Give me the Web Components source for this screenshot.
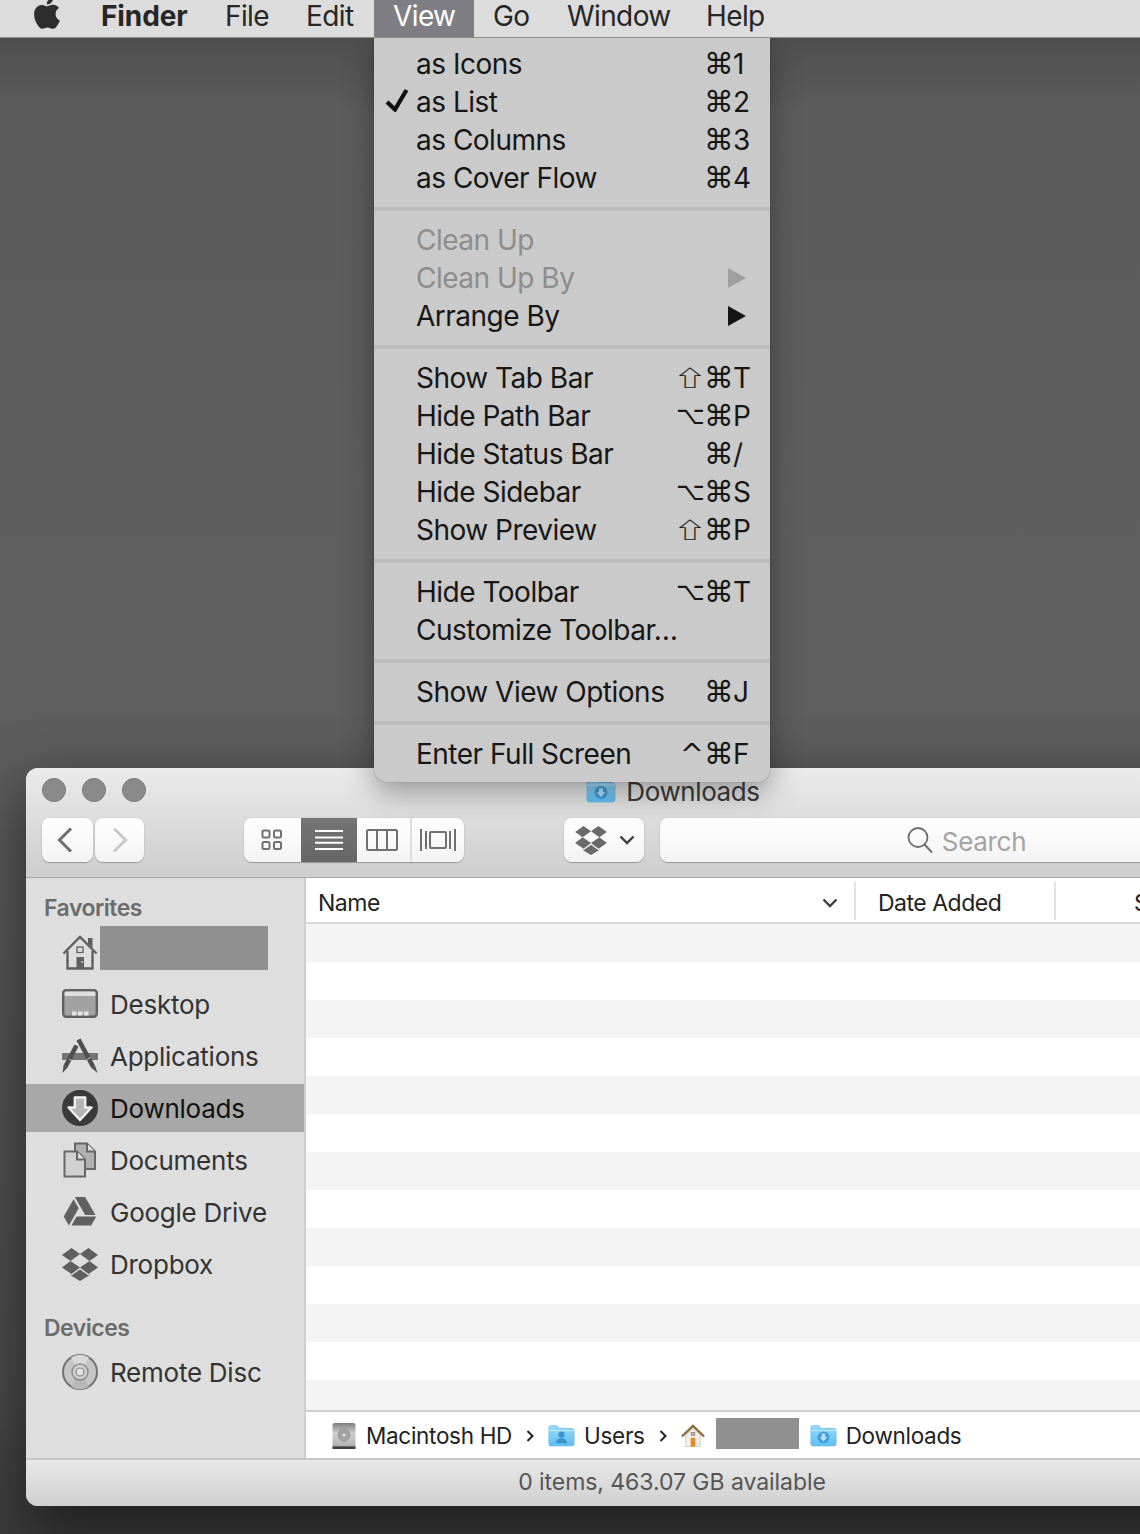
<!DOCTYPE html>
<html><head><meta charset="utf-8">
<style>
html,body{margin:0;padding:0}
body{width:1140px;height:1534px;overflow:hidden;font-family:Inter,Roboto,"Liberation Sans",sans-serif;background:#555}
</style></head><body>
<mac-desktop>
  <mac-menubar slot="bar">
    <mac-icon name="apple" style="margin:-6px 16px 0 28px"></mac-icon>
    <bar-item bold w="124">Finder</bar-item>
    <bar-item w="81">File</bar-item>
    <bar-item w="87">Edit</bar-item>
    <bar-item active w="100">View</bar-item>
    <bar-item w="74">Go</bar-item>
    <bar-item w="139">Window</bar-item>
    <bar-item w="90">Help</bar-item>
  </mac-menubar>
  <finder-window slot="win">
    <finder-toolbar slot="toolbar"></finder-toolbar>
    <finder-sidebar slot="side">
      <side-head>Favorites</side-head>
      <side-item icon="home" redacted></side-item>
      <side-item icon="desktop">Desktop</side-item>
      <side-item icon="apps">Applications</side-item>
      <side-item icon="download" selected>Downloads</side-item>
      <side-item icon="docs">Documents</side-item>
      <side-item icon="gdrive">Google Drive</side-item>
      <side-item icon="dropbox">Dropbox</side-item>
      <side-head devices>Devices</side-head>
      <side-item icon="disc">Remote Disc</side-item>
    </finder-sidebar>
    <finder-list slot="list"></finder-list>
    <path-bar slot="path"></path-bar>
    <status-bar slot="status">0 items, 463.07 GB available</status-bar>
  </finder-window>
  <view-menu slot="menu">
    <menu-row sc-key="1">as Icons</menu-row>
    <menu-row checked sc-key="2">as List</menu-row>
    <menu-row sc-key="3">as Columns</menu-row>
    <menu-row sc-key="4">as Cover Flow</menu-row>
    <menu-sep></menu-sep>
    <menu-row disabled>Clean Up</menu-row>
    <menu-row disabled arrow>Clean Up By</menu-row>
    <menu-row arrow>Arrange By</menu-row>
    <menu-sep></menu-sep>
    <menu-row sc-mod="⇧" sc-key="T">Show Tab Bar</menu-row>
    <menu-row sc-mod="⌥" sc-key="P">Hide Path Bar</menu-row>
    <menu-row sc-key="/">Hide Status Bar</menu-row>
    <menu-row sc-mod="⌥" sc-key="S">Hide Sidebar</menu-row>
    <menu-row sc-mod="⇧" sc-key="P">Show Preview</menu-row>
    <menu-sep></menu-sep>
    <menu-row sc-mod="⌥" sc-key="T">Hide Toolbar</menu-row>
    <menu-row>Customize Toolbar…</menu-row>
    <menu-sep></menu-sep>
    <menu-row sc-key="J">Show View Options</menu-row>
    <menu-sep></menu-sep>
    <menu-row sc-mod="^" sc-key="F">Enter Full Screen</menu-row>
  </view-menu>
</mac-desktop>
<script>
const folder=(glyph)=>`<defs><linearGradient id="fg" x1="0" y1="0" x2="0" y2="1"><stop offset="0" stop-color="#9adafb"/><stop offset="1" stop-color="#5fbef1"/></linearGradient></defs><path d="M1 3.5Q1 1.5 3 1.5H10L12.5 4.5H26Q29 4.5 29 7V22Q29 24 27 24H3Q1 24 1 22Z" fill="url(#fg)" stroke="#6dbbe6" stroke-width=".8"/><path d="M1 7H29" stroke="#c4ebfd" stroke-width="1"/>${glyph}`;
const ICONS={
 apple:[38,38,'0 0 24 24',`<path fill="#2d2d2d" d="M18.71 19.5c-.83 1.24-1.71 2.45-3.05 2.47-1.34.03-1.77-.79-3.29-.79-1.53 0-2 .77-3.27.82-1.31.05-2.3-1.32-3.14-2.53C4.25 17 2.94 12.45 4.7 9.39c.87-1.52 2.43-2.48 4.12-2.51 1.28-.02 2.5.87 3.29.87.78 0 2.26-1.07 3.81-.91.65.03 2.47.26 3.64 1.98-.09.06-2.17 1.28-2.15 3.81.03 3.02 2.65 4.03 2.68 4.04-.03.07-.42 1.44-1.38 2.83M13 3.5c.73-.83 1.94-1.46 2.94-1.5.13 1.17-.34 2.35-1.04 3.19-.69.85-1.83 1.51-2.95 1.42-.15-1.15.41-2.35 1.05-3.11z"/>`],
 home:[36,36,'0 0 36 36',`<g fill="none" stroke="#5f5f5f" stroke-width="2.4"><path d="M1.5 19.5L18 3L34.5 19.5"/><path d="M5.5 17V34.5H30.5V17"/><rect x="15" y="13" width="6" height="5.5" stroke-width="1.3"/></g><path fill="#5f5f5f" d="M26 4h4.5v10L26 9.5zM14.5 23h7.5v11.5h-7.5z"/><rect x="19.5" y="27" width="1.2" height="2" fill="#ddd"/>`],
 desktop:[36,30,'0 0 36 30',`<rect x="1.2" y="1.2" width="33.6" height="26.6" rx="3" fill="#a2a2a2" stroke="#606060" stroke-width="2.4"/><rect x="2.5" y="2.5" width="31" height="4.5" rx="1.5" fill="#dedede"/><path fill="#e4e4e4" d="M10 22.5h4.5v4H10zM16 22.5h4.5v4H16zM22 22.5h4.5v4H22z"/>`],
 apps:[36,36,'0 0 36 36',`<rect x="0" y="15" width="36" height="7" fill="#747474"/><path d="M14.500 7.500L3.500 28.500" stroke="#4e4e4e" stroke-width="4.600" fill="none"/><path d="M1.500 27.500L5.500 29.500L.5 35z" fill="#4e4e4e"/><path d="M7 21L10.500 23" stroke="#cfcfcf" stroke-width="1"/><path d="M16.500 1.500L31 28.500" stroke="#4e4e4e" stroke-width="4.600" fill="none"/><path d="M29 29.500L33 27.500L35.500 35z" fill="#4e4e4e"/><path d="M25 21.500L28.500 19.500" stroke="#cfcfcf" stroke-width="1"/>`],
 download:[36,36,'0 0 36 36',`<circle cx="18" cy="18" r="18" fill="#3a3a3a"/><path d="M12.800 7.500H23.200V17.500H29.500L18 30L6.500 17.500H12.800Z" fill="#b4b4b4" stroke="#f0f0f0" stroke-width="2.400" stroke-linejoin="round"/>`],
 docs:[34,36,'0 0 34 36',`<path d="M12 1.500H24L32 9.500V27H12Z" fill="#b0b0b0" stroke="#666" stroke-width="2"/><path d="M24 1.500V9.500H32" fill="#dedede" stroke="#666" stroke-width="2"/><path d="M1.500 9.500H14L22 17.500V34.500H1.500Z" fill="#d0d0d0" stroke="#666" stroke-width="2"/><path d="M14 9.500V17.500H22" fill="#dedede" stroke="#666" stroke-width="2"/>`],
 gdrive:[36,36,'0 0 24 24',`<path fill="#606060" d="M7.71 3.5L1.15 15L4.58 21L11.13 9.5M9.73 15L6.3 21H19.42L22.85 15M22.28 14L15.42 2H8.58V2.03L15.42 14H22.28Z"/>`],
 dropbox:[36,34,'0 0 36 34',`<path fill="#5f5f5f" d="M0 8L9.500 1L18 7L8.500 14ZM36 8L26.500 1L18 7L27.500 14ZM8.500 14L18 20.500L9.500 27L0 20.500ZM27.500 14L18 20.500L26.500 27L36 20.500Z"/><path fill="#5f5f5f" d="M8 27.500L9.500 28.500L18 22.500L26.500 28.500L28 27.500V28L18 34L8 28Z"/>`],
 disc:[36,36,'0 0 36 36',`<circle cx="18" cy="18" r="17" fill="#c6c6c6" stroke="#727272" stroke-width="2"/><path d="M18 18L9 3.500A17 17 0 0 1 27 3.500Z" fill="#d8d8d8"/><path d="M18 18L9 32.500A17 17 0 0 0 27 32.500Z" fill="#b8b8b8"/><circle cx="18" cy="18" r="8" fill="#cfcfcf" stroke="#8a8a8a" stroke-width="1.400"/><circle cx="18" cy="18" r="4" fill="#e0e0e0" stroke="#8a8a8a" stroke-width="1.200"/>`],
 hd:[26,28,'0 0 26 28',`<defs><linearGradient id="hg" x1="0" y1="0" x2="0" y2="1"><stop offset="0" stop-color="#7d7d7d"/><stop offset=".4" stop-color="#cfcfcf"/><stop offset=".85" stop-color="#b5b5b5"/><stop offset="1" stop-color="#6a6a6a"/></linearGradient></defs><rect x="1.500" y="1" width="23" height="26" rx="2" fill="url(#hg)"/><circle cx="13" cy="13" r="6" fill="#a4a4a4" stroke="#8a8a8a" stroke-width=".8"/><circle cx="13" cy="13" r="1.600" fill="#dcdcdc"/><rect x="1.500" y="24.500" width="23" height="2.500" fill="#3f3f3f"/>`],
 fusers:[30,26,'0 0 30 26',folder(`<circle cx="15" cy="11.500" r="3.400" fill="#3c94cc"/><path d="M8.500 21Q9.500 15.500 15 15.500T21.500 21Z" fill="#3c94cc"/>`)],
 fdown:[30,26,'0 0 30 26',folder(`<circle cx="15" cy="14.500" r="6.500" fill="#3f9cd8"/><path d="M13 10.300h4v4h2.400L15 19.100L10.600 14.300h2.400z" fill="#b8e4fb"/>`)],
 phome:[24,26,'0 0 26 26',`<path d="M5 12V24.500H21V12L13 5Z" fill="#f1efe9" stroke="#c8c2b5" stroke-width=".8"/><path d="M1 13.500L13 2L25 13.500" fill="none" stroke="#8c6b3f" stroke-width="2.500"/><rect x="10.500" y="15" width="5" height="9.500" fill="#ea8a1d"/><rect x="11" y="9" width="4" height="3.500" fill="#bcbcbc" stroke="#8c6b3f" stroke-width=".6"/>`],
 tdrop:[32,30,'0 0 36 34',`<path fill="#6a6a6a" d="M0 8L9.500 1L18 7L8.500 14ZM36 8L26.500 1L18 7L27.500 14ZM8.500 14L18 20.500L9.500 27L0 20.500ZM27.500 14L18 20.500L26.500 27L36 20.500Z"/><path fill="#6a6a6a" d="M8 27.500L9.500 28.500L18 22.500L26.500 28.500L28 27.500V28L18 34L8 28Z"/>`],
 chev:[16,10,'0 0 16 10',`<path d="M1.500 1.500L8 8L14.500 1.500" fill="none" stroke="#3e3e3e" stroke-width="2.400"/>`],
 back:[16,26,'0 0 16 26',`<path d="M14 1.500L2.500 13L14 24.500" fill="none" stroke="#6e6e6e" stroke-width="3"/>`],
 fwd:[16,26,'0 0 16 26',`<path d="M2 1.500L13.500 13L2 24.500" fill="none" stroke="#c8c8c8" stroke-width="3"/>`],
 grid:[22,22,'0 0 22 22',`<g fill="none" stroke="#707070" stroke-width="2"><rect x="1.500" y="1.500" width="7" height="7" rx="1.500"/><rect x="13" y="1.500" width="7" height="7" rx="1.500"/><rect x="1.500" y="13" width="7" height="7" rx="1.500"/><rect x="13" y="13" width="7" height="7" rx="1.500"/></g>`],
 list:[28,20,'0 0 28 20',`<path d="M0 1h28M0 7.500h28M0 12.800h28M0 19h28" stroke="#fff" stroke-width="2"/>`],
 cols:[32,22,'0 0 32 22',`<g fill="none" stroke="#707070" stroke-width="2"><rect x="1" y="1" width="30" height="20" rx="1.500"/><path d="M11 1v20M21 1v20"/></g>`],
 flow:[36,24,'0 0 36 24',`<g fill="none" stroke="#707070" stroke-width="2"><rect x="10" y="4" width="16" height="16" rx="1"/><path d="M1 1v22M6 3v18M30 3v18M35 1v22" stroke-width="2"/></g>`],
 search:[26,28,'0 0 26 28',`<circle cx="11" cy="11.500" r="9.500" fill="none" stroke="#6e6e6e" stroke-width="1.800"/><path d="M17.500 18.500L25 26.500" stroke="#6e6e6e" stroke-width="2"/>`],
 check:[24,24,'0 0 24 24',`<path d="M2 14L10 21.500L21.500 2" fill="none" stroke="#111" stroke-width="4.200"/>`]
};
function def(name,css,html,init){
  customElements.define(name,class extends HTMLElement{
    constructor(){super();this.attachShadow({mode:'open'}).innerHTML=`<style>${css}</style>${typeof html==='function'?html(this):html}`;}
    connectedCallback(){if(init)init(this)}
  });
}
function ic(n,st='',w='',h=''){return `<mac-icon name="${n}" style="${st}" ${w?`w="${w}" h="${h}"`:''}></mac-icon>`}
customElements.define('mac-icon',class extends HTMLElement{
  constructor(){super();this.attachShadow({mode:'open'});}
  connectedCallback(){let [w,h,vb,s]=ICONS[this.getAttribute('name')];
   w=this.getAttribute('w')||w;h=this.getAttribute('h')||h;
   this.shadowRoot.innerHTML=`<style>:host{display:inline-flex;flex:none;width:${w}px;height:${h}px}svg{display:block}</style><svg width="${w}" height="${h}" viewBox="${vb}">${s}</svg>`;}
});
def('mac-desktop',`:host{display:block;position:relative;width:1140px;height:1534px;overflow:hidden;
 background:linear-gradient(180deg,#4f4f4f 38px,#5c5c5c 110px,#5e5e5e 700px,#4a4a4a 1400px,#3a3a3a 1534px)}
 ::slotted([slot=menu]){position:absolute;left:374px;top:38px;z-index:3}
 ::slotted([slot=win]){position:absolute;left:26px;top:768px;z-index:2}
 ::slotted([slot=bar]){position:relative;z-index:4}`,
 `<slot name="bar"></slot><slot name="win"></slot><slot name="menu"></slot>`);
def('mac-menubar',`:host{display:flex;height:38px;box-sizing:border-box;overflow:hidden;background:#dcdcdc;border-bottom:1px solid #8d8d8d;color:#262626;font:28px/33px Inter,Roboto,sans-serif;letter-spacing:-.6px}`,`<slot></slot>`);
def('bar-item',`:host{display:block;box-sizing:border-box;padding-left:19px;height:38px;white-space:nowrap}
 :host([bold]){font-weight:700;letter-spacing:-.1px}:host([active]){background:#7f7e84;color:#fff}`,`<slot></slot>`,
 el=>{el.style.width=el.getAttribute('w')+'px'});
def('view-menu',`:host{display:block;width:396px;box-sizing:border-box;padding:7px 0 9px;background:#cacaca;border-radius:0 0 12px 12px;box-shadow:0 10px 30px rgba(0,0,0,.35),0 0 1px rgba(0,0,0,.5);color:#161616;font:28px/38px Inter,Roboto,sans-serif;letter-spacing:-.5px}`,`<slot></slot>`);
def('menu-sep',`:host{display:flex;align-items:center;height:24px}i{display:block;flex:1;height:4px;background:#bcbcbc}`,`<i></i>`);
def('menu-row',`:host{display:flex;align-items:center;height:38px;padding:0 18px 0 42px;position:relative;white-space:nowrap}
 :host([disabled]){color:#8d8d8d}
 .lab{flex:1;min-width:0}
 .chk{position:absolute;left:11px;top:0;width:24px;height:24px;display:none}
 :host([checked]) .chk{display:block}
 .sc{display:grid;grid-template-columns:30px 26px 20px;align-items:center;letter-spacing:0}
 .sc:empty{display:none}
 .m{text-align:right;padding-right:6px;font-family:"DejaVu Sans",sans-serif;font-size:25px;min-width:0}
 .m.opt{padding-right:8px}
 .m.shift{padding-right:5px;font-family:"Noto Sans CJK JP",sans-serif;font-size:22px}
 .m.shift b{display:inline-block;font-weight:400;transform:translateY(-2px) scaleX(1.5)}
 .m.caret{padding-right:2px;font-size:29px}
 .c{margin-left:-2px;font-family:"DejaVu Sans",sans-serif;font-size:29.500px;min-width:0}
 .k{padding-left:1px}
 .tri{width:0;height:0;border-left:18px solid currentColor;border-top:10px solid transparent;border-bottom:10px solid transparent;margin-right:6px;display:none}
 :host([arrow]) .tri{display:block}:host([disabled]) .tri{opacity:.7}`,
 el=>`<span class="chk">${ic('check')}</span><span class="lab"><slot></slot></span><span class="tri"></span><span class="sc" id="sc"></span>`,
 el=>{const k=el.getAttribute('sc-key');if(k){const m=el.getAttribute('sc-mod')||'';const cl={'⇧':'shift','⌥':'opt','^':'caret'}[m]||'';el.shadowRoot.getElementById('sc').innerHTML=`<span class="m ${cl}">${m==='⇧'?'<b>⇧</b>':m}</span><span class="c">⌘</span><span class="k">${k}</span>`}});
def('finder-window',`:host{display:flex;flex-direction:column;width:1292px;height:738px;border-radius:12px;overflow:hidden;box-shadow:0 20px 60px rgba(0,0,0,.55);background:#ddd}
 .body{display:flex;height:580px}.r{flex:1;display:flex;flex-direction:column;min-width:0;background:#fff}
 ::slotted([slot=list]){flex:1;min-height:0}`,
 `<slot name="toolbar"></slot><div class="body"><slot name="side"></slot><div class="r"><slot name="list"></slot><slot name="path"></slot></div></div><slot name="status"></slot>`);
def('finder-toolbar',`:host{display:block;height:110px;box-sizing:border-box;background:linear-gradient(180deg,#ebebeb,#cdcdcd);border-bottom:1px solid #a6a6a6;font-family:Inter,Roboto,sans-serif}
 .top{display:grid;grid-template-columns:1fr auto 1fr;align-items:center;height:44px;padding:0 16px}
 .lights{display:flex;gap:16px}.lights i{width:22px;height:22px;border-radius:50%;background:#8a8a8a;border:1px solid #777}
 .title{display:flex;align-items:center;gap:10px;font-size:26px;color:#3a3a3a;letter-spacing:-.4px;padding:2px 0 0 2px}
 .tools{display:flex;margin:6px 0 0;padding-left:16px;height:44px}
 .btn{display:flex;align-items:center;justify-content:center;height:44px;box-sizing:border-box;border-radius:8px;background:linear-gradient(#fff,#f3f3f3);box-shadow:0 1px 1px rgba(0,0,0,.25),0 0 0 .5px rgba(0,0,0,.08)}
 .seg{display:flex;margin-left:100px;width:220px;border-radius:8px;overflow:hidden;background:linear-gradient(#fff,#f3f3f3);box-shadow:0 1px 1px rgba(0,0,0,.25),0 0 0 .5px rgba(0,0,0,.08)}
 .seg span{display:flex;align-items:center;justify-content:center}
 .seg .on{background:linear-gradient(#757575,#666)}
 .seg .bl{border-left:2px solid #dedede;box-sizing:border-box}
 .search{margin-left:16px;width:612px;gap:9px;font-size:26px;color:#a4a4a4;letter-spacing:-.3px;padding-left:1px}
 .search span{padding-top:2px}`,
 `<div class="top"><div class="lights"><i></i><i></i><i></i></div><div class="title">${ic('fdown')}<span>Downloads</span></div><div></div></div>
 <div class="tools">
  <div class="btn" style="width:51px;padding-right:5px">${ic('back')}</div><div class="btn" style="width:49px;margin-left:2px">${ic('fwd')}</div>
  <div class="seg"><span style="width:57px;padding-right:2px;box-sizing:border-box">${ic('grid')}</span><span class="on" style="width:56px">${ic('list')}</span><span style="width:53px;padding-right:3px;box-sizing:border-box">${ic('cols')}</span><span class="bl" style="width:54px">${ic('flow')}</span></div>
  <div class="btn" style="width:80px;margin-left:100px;gap:12px;padding-left:2px">${ic('tdrop')}${ic('chev')}</div>
  <div class="btn search">${ic('search')}<span>Search</span></div>
 </div>`);
def('finder-sidebar',`:host{display:block;flex:none;width:278px;height:580px;background:#dedede;border-right:2px solid #cfcfcf;overflow:hidden}`,`<slot></slot>`);
def('side-head',`:host{display:block;height:30px;margin:15px 0 5px;padding-left:18px;font:600 23px/30px Inter,Roboto,sans-serif;color:#6c6c6c;letter-spacing:-.5px}
 :host([devices]){margin:25px 0 5px}`,`<slot></slot>`);
def('side-item',`:host{display:flex;align-items:center;height:48px;box-sizing:border-box;padding-top:2px;margin-bottom:4px;padding-left:36px;gap:12px;font:26px/46px Inter,Roboto,sans-serif;color:#333;letter-spacing:-.25px;white-space:nowrap}
 :host([selected]){background:#a8a8a8;color:#111}
 .red{display:none;width:168px;height:44px;background:#909090;margin:-10px 0 0 -10px}
 :host([redacted]) .red{display:block}
 .ico{display:flex;width:36px;flex:none;justify-content:center;margin-top:-2px}`,
 el=>`<span class="ico">${ic(el.getAttribute('icon'))}</span><span class="red"></span><slot></slot>`);
def('finder-list',`:host{display:flex;flex-direction:column;min-height:0;font:23px/32px Inter,Roboto,sans-serif;color:#222;letter-spacing:-.5px}
 .h{display:flex;height:46px;box-sizing:border-box;border-bottom:2px solid #d6d6d6;padding-top:2px;flex:none;white-space:nowrap}
 .c{display:flex;align-items:center;box-sizing:border-box;height:38px;margin-top:2px;border-right:2px solid #e4e4e4}
 .c span{padding-top:3px}
 .rows{flex:1;background:repeating-linear-gradient(180deg,#f4f4f4 0 38px,#fff 38px 76px)}`,
 `<div class="h"><div class="c" style="width:550px;padding:4px 16px 0 12px;justify-content:space-between"><span style="padding:0">Name</span>${ic('chev')}</div><div class="c" style="width:200px;padding-left:22px"><span>Date Added</span></div><div class="c" style="border:0;padding-left:78px"><span>Size</span></div></div><div class="rows"></div>`);
def('path-bar',`:host{display:flex;align-items:center;height:48px;box-sizing:border-box;flex:none;background:#fff;border-top:2px solid #d0d0d0;padding:2px 0 0 25px;font:22.500px/44px Inter,Roboto,sans-serif;color:#222;letter-spacing:-.3px;white-space:nowrap}
 .t{margin-left:9px}.f{margin-left:9px}.s{margin:0 14px;width:8px;display:flex}
 .red{width:83px;height:31px;background:#909090;margin:4px 11px 0 11px;align-self:flex-start}`,
 `${ic('hd')}<span class="t">Macintosh HD</span><span class="s"><svg width="8" height="14" viewBox="0 0 8 14"><path d="M1.500 2L6.500 7L1.500 12" fill="none" stroke="#222" stroke-width="2"/></svg></span>${ic('fusers','',27,24)}<span class="f">Users</span><span class="s"><svg width="8" height="14" viewBox="0 0 8 14"><path d="M1.500 2L6.500 7L1.500 12" fill="none" stroke="#222" stroke-width="2"/></svg></span>${ic('phome')}<span class="red"></span>${ic('fdown','',27,24)}<span class="f">Downloads</span>`);
def('status-bar',`:host{display:flex;align-items:center;justify-content:center;height:48px;box-sizing:border-box;border-top:2px solid #c6c6c6;padding-bottom:3px;background:linear-gradient(#e8e8e8,#cfcfcf);font:23px Inter,Roboto,sans-serif;color:#555;letter-spacing:-.05px}`,`<slot></slot>`);
</script>
</body></html>
